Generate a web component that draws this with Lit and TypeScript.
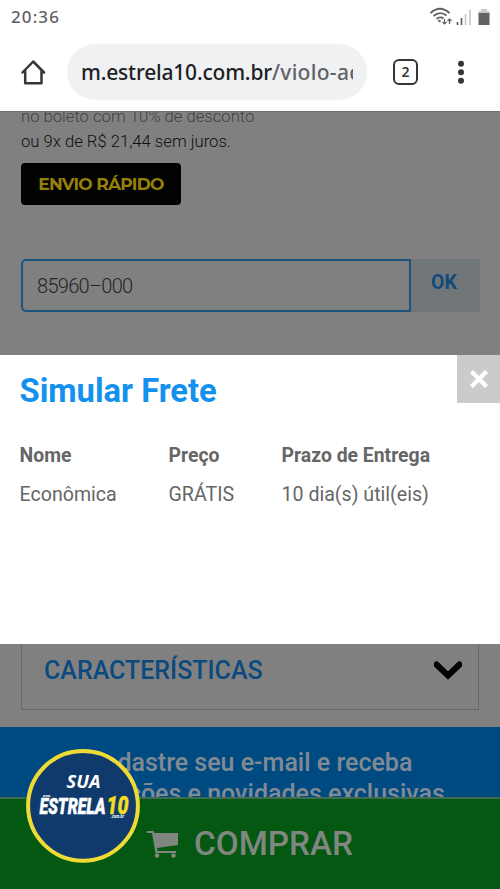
import { LitElement, html, css, svg } from "lit";
import { customElement, property } from "lit/decorators.js";

@customElement("browser-chrome")
class BrowserChrome extends LitElement {
  static styles = css`
    :host { display: block; height: 111px; background: #fff; font-family: "Noto Sans", sans-serif; }
    .status { height: 34px; display: flex; align-items: center; justify-content: space-between; padding: 0 9px 0 11px; box-sizing: border-box; }
    .time { font-size: 17px; line-height: 34px; color: #626262; font-weight: 500; letter-spacing: 1.1px; }
    .bar { height: 77px; display: flex; align-items: flex-start; }
    .home { margin: 24px 0 0 19px; width: 28px; height: 28px; }
    .url { margin: 10px 0 0 20px; width: 300px; height: 56px; border-radius: 28px; background: #f0f1f3; box-sizing: border-box; padding: 0 14px; overflow: hidden; }
    .address { display: block; overflow: hidden; white-space: nowrap; font-size: 21px; line-height: 57px; }
    .host { color: #202124; font-weight: 500; letter-spacing: -0.2px; }
    .path { color: #5f6368; font-weight: 500; letter-spacing: 0.3px; }
    .tabs { margin: 25px 0 0 26px; width: 25px; height: 26px; box-sizing: border-box; border: 2.5px solid #35363a; border-radius: 6px; font-size: 14px; font-weight: 600; line-height: 21px; text-align: center; color: #35363a; }
    .menu { margin: 26px 0 0 39px; width: 8px; height: 24px; }
    svg { display: block; }
  `;
  render() {
    return html`
      <div class="status">
        <span class="time">20:36</span>
        <svg width="62" height="20" viewBox="429 7 62 20" fill="none" stroke="#606060">
          <g stroke-width="1.8">
            <path d="M430.5 13 Q440 4.500 449.500 13" />
            <path d="M433.500 16 Q440 10.500 446.500 15.500" />
            <path d="M436.500 19 Q440 16 443.500 18.500" />
          </g>
          <circle cx="439.500" cy="21" r="1.300" fill="#606060" stroke="none" />
          <path d="M444.500 19v5m-2-2 2 2 2-2M449.500 24v-5m-2 2 2-2 2 2" stroke-width="1.200" />
          <path d="M457.500 22v3M461.500 18v7" stroke-width="1.700" />
          <path d="M465.500 14v11M470 9.500v15.500" stroke="#c8c8c8" stroke-width="1.700" />
          <path d="M481 9h6v2h2.500v3h-11v-3h2.500z" fill="#c8c8c8" stroke="none" />
          <rect x="478.500" y="13" width="11" height="12" fill="#626262" stroke="none" />
        </svg>
      </div>
      <div class="bar">
        <svg class="home" viewBox="0 0 28 28" fill="none" stroke="#35363a" stroke-width="2.500" stroke-linejoin="round" stroke-linecap="round">
          <path d="M3.500 14.500 14.200 3.500 25 14.500M6.200 12.500V25.200H22.500V12.500" />
        </svg>
        <div class="url"><span class="address"><span class="host">m.estrela10.com.br</span><span class="path">/violo-aco</span></span></div>
        <div class="tabs">2</div>
        <svg class="menu" viewBox="0 0 8 24" fill="#35363a">
          <circle cx="4" cy="3.700" r="3" /><circle cx="4" cy="12.200" r="3" /><circle cx="4" cy="20.700" r="3" />
        </svg>
      </div>
    `;
  }
}

@customElement("shipping-dialog")
class ShippingDialog extends LitElement {
  @property({ attribute: false }) columns = [
    { label: "Nome", value: "Econômica" },
    { label: "Preço", value: "GRÁTIS" },
    { label: "Prazo de Entrega", value: "10 dia(s) útil(eis)" },
  ];
  static styles = css`
    :host { display: block; height: 289px; background: #fff; font-family: Roboto, sans-serif; color: #666; }
    .head { display: flex; justify-content: space-between; height: 81px; }
    .title { margin: 0; padding: 15px 0 0 19.500px; font-size: 32.700px; line-height: 42px; font-weight: 700; color: #1391ee; }
    .close { width: 43px; height: 48px; background: #cbcbcb; display: grid; place-items: center; }
    .table { display: grid; grid-template-columns: 149px 113px 1fr; padding-left: 19.500px; grid-auto-rows: 39px; font-size: 19.400px; line-height: 39px; white-space: nowrap; }
    .label { font-weight: 700; }
    .value { font-weight: 450; font-size: 19.600px; }
  `;
  render() {
    return html`
      <div class="head">
        <h1 class="title">Simular Frete</h1>
        <div class="close">
          <svg width="20" height="20" viewBox="0 0 20 20" stroke="#fff" stroke-width="4.300"><path d="M2.500 2.500 17.500 17.500M17.500 2.500 2.500 17.500" /></svg>
        </div>
      </div>
      <div class="table">
        ${this.columns.map((c) => html`<span class="label">${c.label}</span>`)}
        ${this.columns.map((c) => html`<span class="value">${c.value}</span>`)}
      </div>
    `;
  }
}

@customElement("brand-badge")
class BrandBadge extends LitElement {
  static styles = css`
    :host { display: block; width: 116px; height: 116px; }
    svg { display: block; }
    text { font-family: "Open Sans", sans-serif; font-weight: 700; font-style: italic; }
    .name { font-family: Roboto, sans-serif; font-weight: 900; }
  `;
  render() {
    return html`
      <svg width="116" height="116" viewBox="0 0 116 116">
        <circle cx="58" cy="57.800" r="54.900" fill="#103a6c" stroke="#efdb36" stroke-width="4" />
        ${svg`
          <text x="41.500" y="40" font-size="18" textLength="34" lengthAdjust="spacingAndGlyphs" fill="#fff">SUA</text>
          <text class="name" x="14.500" y="65.500" font-size="21.500" textLength="66" lengthAdjust="spacingAndGlyphs" fill="#fff" stroke="#fff" stroke-width="0.500">ESTRELA</text>
          <text class="name" x="81.500" y="65.500" font-size="26" textLength="22" lengthAdjust="spacingAndGlyphs" fill="#f3df20" stroke="#f3df20" stroke-width="0.500">10</text>
          <text x="18" y="48.500" font-size="4" textLength="8" lengthAdjust="spacingAndGlyphs" fill="#fff">www.</text>
          <text x="86" y="70" font-size="4.500" textLength="13" lengthAdjust="spacingAndGlyphs" fill="#fff">.com.br</text>`}
      </svg>
    `;
  }
}

@customElement("app-root")
class AppRoot extends LitElement {
  static styles = css`
    :host { display: block; position: relative; width: 500px; height: 889px; overflow: hidden; background: #808080; font-family: Roboto, sans-serif; }
    .product { height: 244px; box-sizing: border-box; padding: 0 20px 0 21px; overflow: hidden; border-top: 1px solid #707070; }
    .offer { margin: 0; font-size: 16.650px; line-height: 25px; height: 25px; font-weight: 300; white-space: nowrap; }
    .boleto { margin-top: -8px; color: #404040; }
    .parcels { color: #101010; }
    .fast { margin-top: 9px; width: 160px; height: 42px; border-radius: 4px; background: #020202; color: #958008; font-family: Montserrat, Inter, sans-serif; font-size: 17px; font-weight: 700; line-height: 42px; text-align: center; letter-spacing: -0.7px; }
    .zip { margin-top: 54px; display: flex; height: 53px; }
    .field { width: 390px; box-sizing: border-box; border: 2px solid #19557f; border-radius: 5px 0 0 5px; padding-left: 14px; font-size: 20px; line-height: 50px; font-weight: 300; letter-spacing: -0.700px; color: #242424; }
    .ok { flex: 1; background: #717679; color: #114b7b; font-size: 19.500px; font-weight: 700; line-height: 48px; text-align: center; padding-right: 3px; box-sizing: border-box; }
    .details { height: 83px; padding: 0 21px; }
    .panel { height: 66px; box-sizing: border-box; border: 1px solid #686868; border-top: 0; padding: 0 16px 0 22px; display: flex; justify-content: space-between; }
    .heading { font-size: 25px; line-height: 54px; font-weight: 500; color: #0a4a7e; }
    .chevron { margin-top: 17px; }
    .news { height: 70px; box-sizing: border-box; padding-top: 20px; background: #004a82; color: #808a93; font-size: 25px; line-height: 31px; font-weight: 500; text-align: center; white-space: nowrap; overflow: hidden; }
    .line { display: block; }
    .buy { height: 92px; box-sizing: border-box; border-top: 2px solid #406b50; background: #045812; color: #808780; display: flex; padding-left: 147px; }
    .cart { margin-top: 31px; width: 32px; height: 29px; }
    .buytext { margin-left: 15px; font-size: 33.300px; line-height: 90px; font-weight: 500; }
    .badge { position: absolute; left: 25px; top: 748px; }
  `;
  render() {
    return html`
      <browser-chrome></browser-chrome>
      <section class="product">
        <p class="offer boleto">no boleto com 10% de desconto</p>
        <p class="offer parcels">ou 9x de R$ 21,44 sem juros.</p>
        <div class="fast">ENVIO RÁPIDO</div>
        <div class="zip"><div class="field">85960–000</div><div class="ok">OK</div></div>
      </section>
      <shipping-dialog></shipping-dialog>
      <section class="details">
        <div class="panel">
          <span class="heading">CARACTERÍSTICAS</span>
          <svg class="chevron" width="28" height="20" viewBox="0 0 28 20" fill="none" stroke="#040404" stroke-width="6"><path d="M2.500 3.500 14 14.500 25.500 3.500" stroke-linecap="round" /></svg>
        </div>
      </section>
      <section class="news">
        <span class="line">Cadastre seu e-mail e receba</span>
        <span class="line">promoções e novidades exclusivas</span>
      </section>
      <section class="buy">
        <svg class="cart" viewBox="0 0 32 29" fill="#808780">
          <path d="M0 1h6.500l1 2H31v12L10 18l.5 3H29v2H8.500L5 3H0z" />
          <circle cx="10" cy="25.500" r="2.300" /><circle cx="26.500" cy="25.500" r="2.300" />
        </svg>
        <span class="buytext">COMPRAR</span>
      </section>
      <brand-badge class="badge"></brand-badge>
    `;
  }
}
